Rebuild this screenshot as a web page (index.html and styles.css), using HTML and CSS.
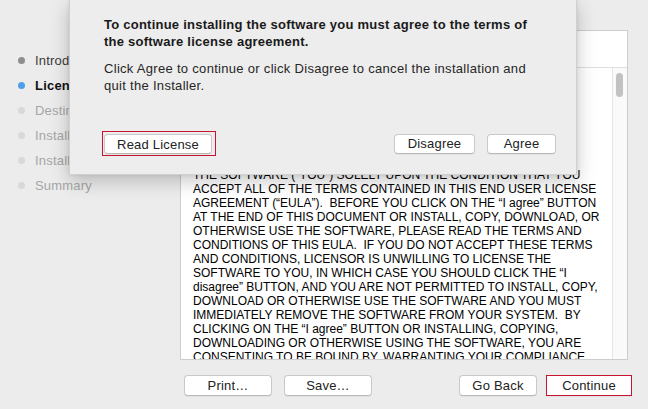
FILE: index.html
```html
<!DOCTYPE html>
<html lang="en">
<head>
<meta charset="utf-8">
<title>Installer</title>
<link rel="stylesheet" href="styles.css">
</head>
<body>
<div class="window">
  <aside class="sidebar">
    <ul class="steps">
      <li class="step done">Introduction</li>
      <li class="step active">License</li>
      <li class="step">Destination Select</li>
      <li class="step">Installation Type</li>
      <li class="step">Installation</li>
      <li class="step">Summary</li>
    </ul>
  </aside>
  <main class="content">
    <div class="panel">
      <div class="panel-head"></div>
      <div class="panel-body">
        <div class="eula">
          <div class="line">THE SOFTWARE (“YOU”) SOLELY UPON THE CONDITION THAT YOU</div>
          <div class="line">ACCEPT ALL OF THE TERMS CONTAINED IN THIS END USER LICENSE</div>
          <div class="line">AGREEMENT (“EULA”).&nbsp; BEFORE YOU CLICK ON THE “I agree” BUTTON</div>
          <div class="line">AT THE END OF THIS DOCUMENT OR INSTALL, COPY, DOWNLOAD, OR</div>
          <div class="line">OTHERWISE USE THE SOFTWARE, PLEASE READ THE TERMS AND</div>
          <div class="line">CONDITIONS OF THIS EULA.&nbsp; IF YOU DO NOT ACCEPT THESE TERMS</div>
          <div class="line">AND CONDITIONS, LICENSOR IS UNWILLING TO LICENSE THE</div>
          <div class="line">SOFTWARE TO YOU, IN WHICH CASE YOU SHOULD CLICK THE “I</div>
          <div class="line">disagree” BUTTON, AND YOU ARE NOT PERMITTED TO INSTALL, COPY,</div>
          <div class="line">DOWNLOAD OR OTHERWISE USE THE SOFTWARE AND YOU MUST</div>
          <div class="line">IMMEDIATELY REMOVE THE SOFTWARE FROM YOUR SYSTEM.&nbsp; BY</div>
          <div class="line">CLICKING ON THE “I agree” BUTTON OR INSTALLING, COPYING,</div>
          <div class="line">DOWNLOADING OR OTHERWISE USING THE SOFTWARE, YOU ARE</div>
          <div class="line">CONSENTING TO BE BOUND BY. WARRANTING YOUR COMPLIANCE</div>
        </div>
        <div class="scrollbar"><div class="thumb"></div></div>
      </div>
    </div>
    <div class="actions">
      <div class="group">
        <button class="btn btn-print">Print…</button>
        <button class="btn btn-save">Save…</button>
      </div>
      <div class="group">
        <button class="btn btn-back">Go Back</button>
        <button class="btn btn-continue marked">Continue</button>
      </div>
    </div>
  </main>
</div>

<div class="sheet">
  <p class="sheet-title">To continue installing the software you must agree to the terms of the software license agreement.</p>
  <p class="sheet-text">Click Agree to continue or click Disagree to cancel the installation and quit the Installer.</p>
  <div class="sheet-actions">
    <span class="mark"><button class="btn btn-read">Read License</button></span>
    <div class="group">
      <button class="btn btn-disagree">Disagree</button>
      <button class="btn btn-agree">Agree</button>
    </div>
  </div>
</div>
</body>
</html>
```

FILE: styles.css
```css
* { box-sizing: border-box; }

html, body {
  margin: 0;
  padding: 0;
}

body {
  width: 648px;
  height: 409px;
  overflow: hidden;
  background: #ececec;
  font-family: "Liberation Sans", Arial, sans-serif;
  color: #222;
  position: relative;
}

.window {
  display: flex;
  height: 409px;
}

/* Sidebar */
.sidebar {
  width: 180px;
  flex: none;
  padding-top: 48px;
  overflow: hidden;
}

.steps {
  list-style: none;
  margin: 0;
  padding: 0 0 0 18px;
}

.step {
  display: flex;
  align-items: center;
  height: 25px;
  font-size: 13px;
  letter-spacing: 0.2px;
  color: #a6a6a6;
  white-space: nowrap;
}

.step::before {
  content: "";
  width: 7px;
  height: 7px;
  border-radius: 50%;
  background: #d9d9d9;
  margin-right: 10px;
  flex: none;
}

.step.done { color: #3a3a3a; }
.step.done::before { background: #8e8e8e; }

.step.active { color: #111; font-weight: bold; }
.step.active::before { background: #4e9fe9; }

/* Main content */
.content {
  flex: 1;
  display: flex;
  flex-direction: column;
  padding: 30px 20px 0 0;
}

.panel {
  height: 330px;
  background: #fff;
  border: 1px solid #cdcdcd;
  display: flex;
  flex-direction: column;
}

.panel-head {
  height: 37px;
  flex: none;
  border-bottom: 1px solid #dedede;
}

.panel-body {
  flex: 1;
  display: flex;
  overflow: hidden;
}

.eula {
  flex: 1;
  padding: 100px 0 0 12px;
  font-size: 12px;
  line-height: 14px;
  color: #000;
  overflow: hidden;
}

.line { white-space: nowrap; }

.scrollbar {
  width: 15px;
  flex: none;
  background: #fafafa;
  border-left: 1px solid #e6e6e6;
  padding: 5px 0 0 3px;
}

.thumb {
  width: 7px;
  height: 24px;
  border-radius: 4px;
  background: #c2c2c2;
}

/* Buttons */
.btn {
  height: 21px;
  padding: 0;
  background: #fff;
  border: 1px solid #c9c9c9;
  border-bottom-color: #b8b8b8;
  border-radius: 4px;
  box-shadow: 0 1px 0 rgba(0, 0, 0, 0.04);
  font-family: "Liberation Sans", Arial, sans-serif;
  font-size: 13px;
  color: #222;
  letter-spacing: 0.2px;
}

.actions {
  display: flex;
  justify-content: space-between;
  align-items: center;
  margin-top: 15px;
  padding-left: 4px;
  margin-right: -4px;
}

.group {
  display: flex;
  gap: 12px;
}

.actions .group:last-child { gap: 9px; }

.btn-print, .btn-save { width: 88px; }
.btn-back { width: 78px; }
.btn-continue { width: 86px; }

.marked {
  border: 1px solid #c8142f;
  border-radius: 0;
}

/* Sheet */
.sheet {
  position: absolute;
  left: 69px;
  top: 0;
  width: 508px;
  height: 175px;
  background: #ededed;
  border: 1px solid #d0d0d0;
  border-top: none;
  box-shadow: 0 6px 18px rgba(0, 0, 0, 0.22), 0 0 4px rgba(0, 0, 0, 0.08);
  padding: 16px 20px 18px 34px;
  display: flex;
  flex-direction: column;
}

.sheet-title {
  margin: 0;
  max-width: 432px;
  font-size: 13px;
  font-weight: bold;
  line-height: 17px;
  letter-spacing: 0.24px;
  color: #1a1a1a;
}

.sheet-text {
  margin: 10px 0 0;
  max-width: 432px;
  font-size: 13px;
  line-height: 17px;
  letter-spacing: 0.3px;
  color: #262626;
}

.sheet-actions {
  margin-top: auto;
  display: flex;
  justify-content: space-between;
  align-items: center;
}

.mark {
  display: inline-flex;
  border: 1px solid #c8142f;
  padding: 2px 3px 1px 1px;
  margin-left: -2px;
}

.btn-read { width: 108px; height: 20px; }
.btn-disagree { width: 81px; height: 20px; }
.btn-agree { width: 69px; height: 20px; }
```
